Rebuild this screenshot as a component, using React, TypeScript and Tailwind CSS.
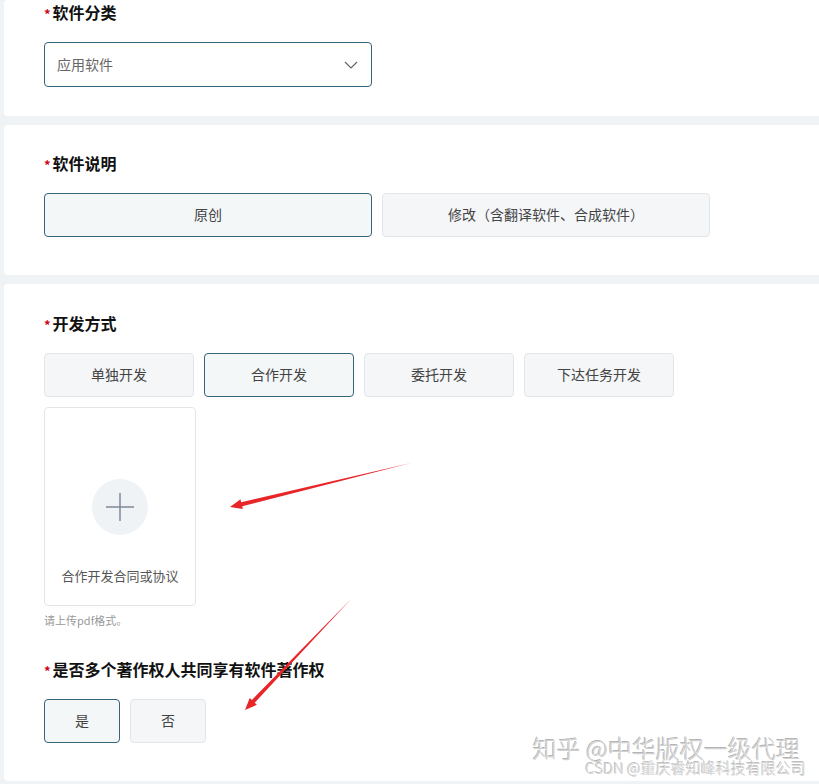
import React from 'react';

const font = { fontFamily: '"Noto Sans CJK SC", "Noto Sans", sans-serif' };

const Label = ({ text }: { text: string }) => (
  <div className="flex items-center h-6 text-[16px] font-bold text-[#111]">
    <span className="text-[#d0021b] text-[13px] mr-[2px] mt-[3px]">*</span>
    {text}
  </div>
);

const Choice = ({ text, active, w }: { text: string; active?: boolean; w: string }) => (
  <div
    className={`${w} h-[44px] rounded-[4px] border flex items-center justify-center text-[14px] text-[#444] ${
      active ? 'border-[#38647a] bg-[#f3f7f8]' : 'border-[#e2e6ea] bg-[#f4f6f8]'
    }`}
  >
    <span className="mt-[-2px]">{text}</span>
  </div>
);

const App = () => {
  return (
    <div className="relative w-[819px] h-[784px] overflow-hidden bg-[#eff3f6]" style={font}>
      <div className="flex flex-col gap-[9px] pl-[4px]">
        {/* 软件分类 */}
        <div className="bg-white rounded-l-[4px] pl-[40px] pt-0 pb-[29px]">
          <Label text="软件分类" />
          <div className="mt-[18px] w-[328px] h-[45px] rounded-[4px] border border-[#38647a] flex items-center justify-between pl-[12px] pr-[13px]">
            <span className="text-[14px] text-[#666]">应用软件</span>
            <svg width="14" height="8" viewBox="0 0 14 8" fill="none">
              <path d="M1 1l6 6 6-6" stroke="#666" strokeWidth="1.2" />
            </svg>
          </div>
        </div>

        {/* 软件说明 */}
        <div className="bg-white rounded-l-[4px] pl-[40px] pt-[26px] pb-[38px]">
          <Label text="软件说明" />
          <div className="mt-[18px] flex gap-[10px]">
            <Choice text="原创" active w="w-[328px]" />
            <Choice text="修改（含翻译软件、合成软件）" w="w-[328px]" />
          </div>
        </div>

        {/* 开发方式 */}
        <div className="bg-white rounded-l-[4px] pl-[40px] pt-[27px] pb-[38px]">
          <Label text="开发方式" />
          <div className="mt-[18px] flex gap-[10px]">
            <Choice text="单独开发" w="w-[150px]" />
            <Choice text="合作开发" active w="w-[150px]" />
            <Choice text="委托开发" w="w-[150px]" />
            <Choice text="下达任务开发" w="w-[150px]" />
          </div>
          <div className="mt-[10px] w-[152px] h-[199px] rounded-[4px] border border-[#e2e5e8] flex flex-col items-center">
            <div className="mt-[71px] w-[56px] h-[56px] rounded-full bg-[#f0f3f6] flex items-center justify-center">
              <svg width="30" height="30" viewBox="0 0 30 30">
                <path d="M15 1v28M1 15h28" stroke="#7e8a96" strokeWidth="1.5" />
              </svg>
            </div>
            <div className="mt-[31px] text-[13px] text-[#555]">合作开发合同或协议</div>
          </div>
          <div className="mt-[5px] text-[11px] leading-[18px] text-[#999]">请上传pdf格式。</div>
          <div className="mt-[28px]">
            <Label text="是否多个著作权人共同享有软件著作权" />
          </div>
          <div className="mt-[18px] flex gap-[10px]">
            <Choice text="是" active w="w-[76px]" />
            <Choice text="否" w="w-[76px]" />
          </div>
        </div>
      </div>

      {/* watermark */}
      <div className="absolute right-[13px] bottom-[8px] flex flex-col items-end text-[#d2d2d2] font-light [text-shadow:1px_1px_0_#fff,-1px_-1px_0_#b5b5b5]">
        <div className="text-[24px] leading-[24px] mr-[6px]">知乎 @中华版权一级代理</div>
        <div className="text-[15px] leading-[16px]">CSDN @重庆睿知峰科技有限公司</div>
      </div>

      {/* annotation arrows */}
      <svg className="absolute inset-0 pointer-events-none" width="819" height="784">
        <polygon
          points="411,463 242.2,506.2 242.9,509.1 230,507 240.5,499.3 241.2,502.3"
          fill="#e8262a"
        />
        <polygon
          points="352,598 254.7,702.7 256.9,704.8 245,710 249.7,697.9 251.9,699.9"
          fill="#e8262a"
        />
      </svg>
    </div>
  );
};

export default App;
